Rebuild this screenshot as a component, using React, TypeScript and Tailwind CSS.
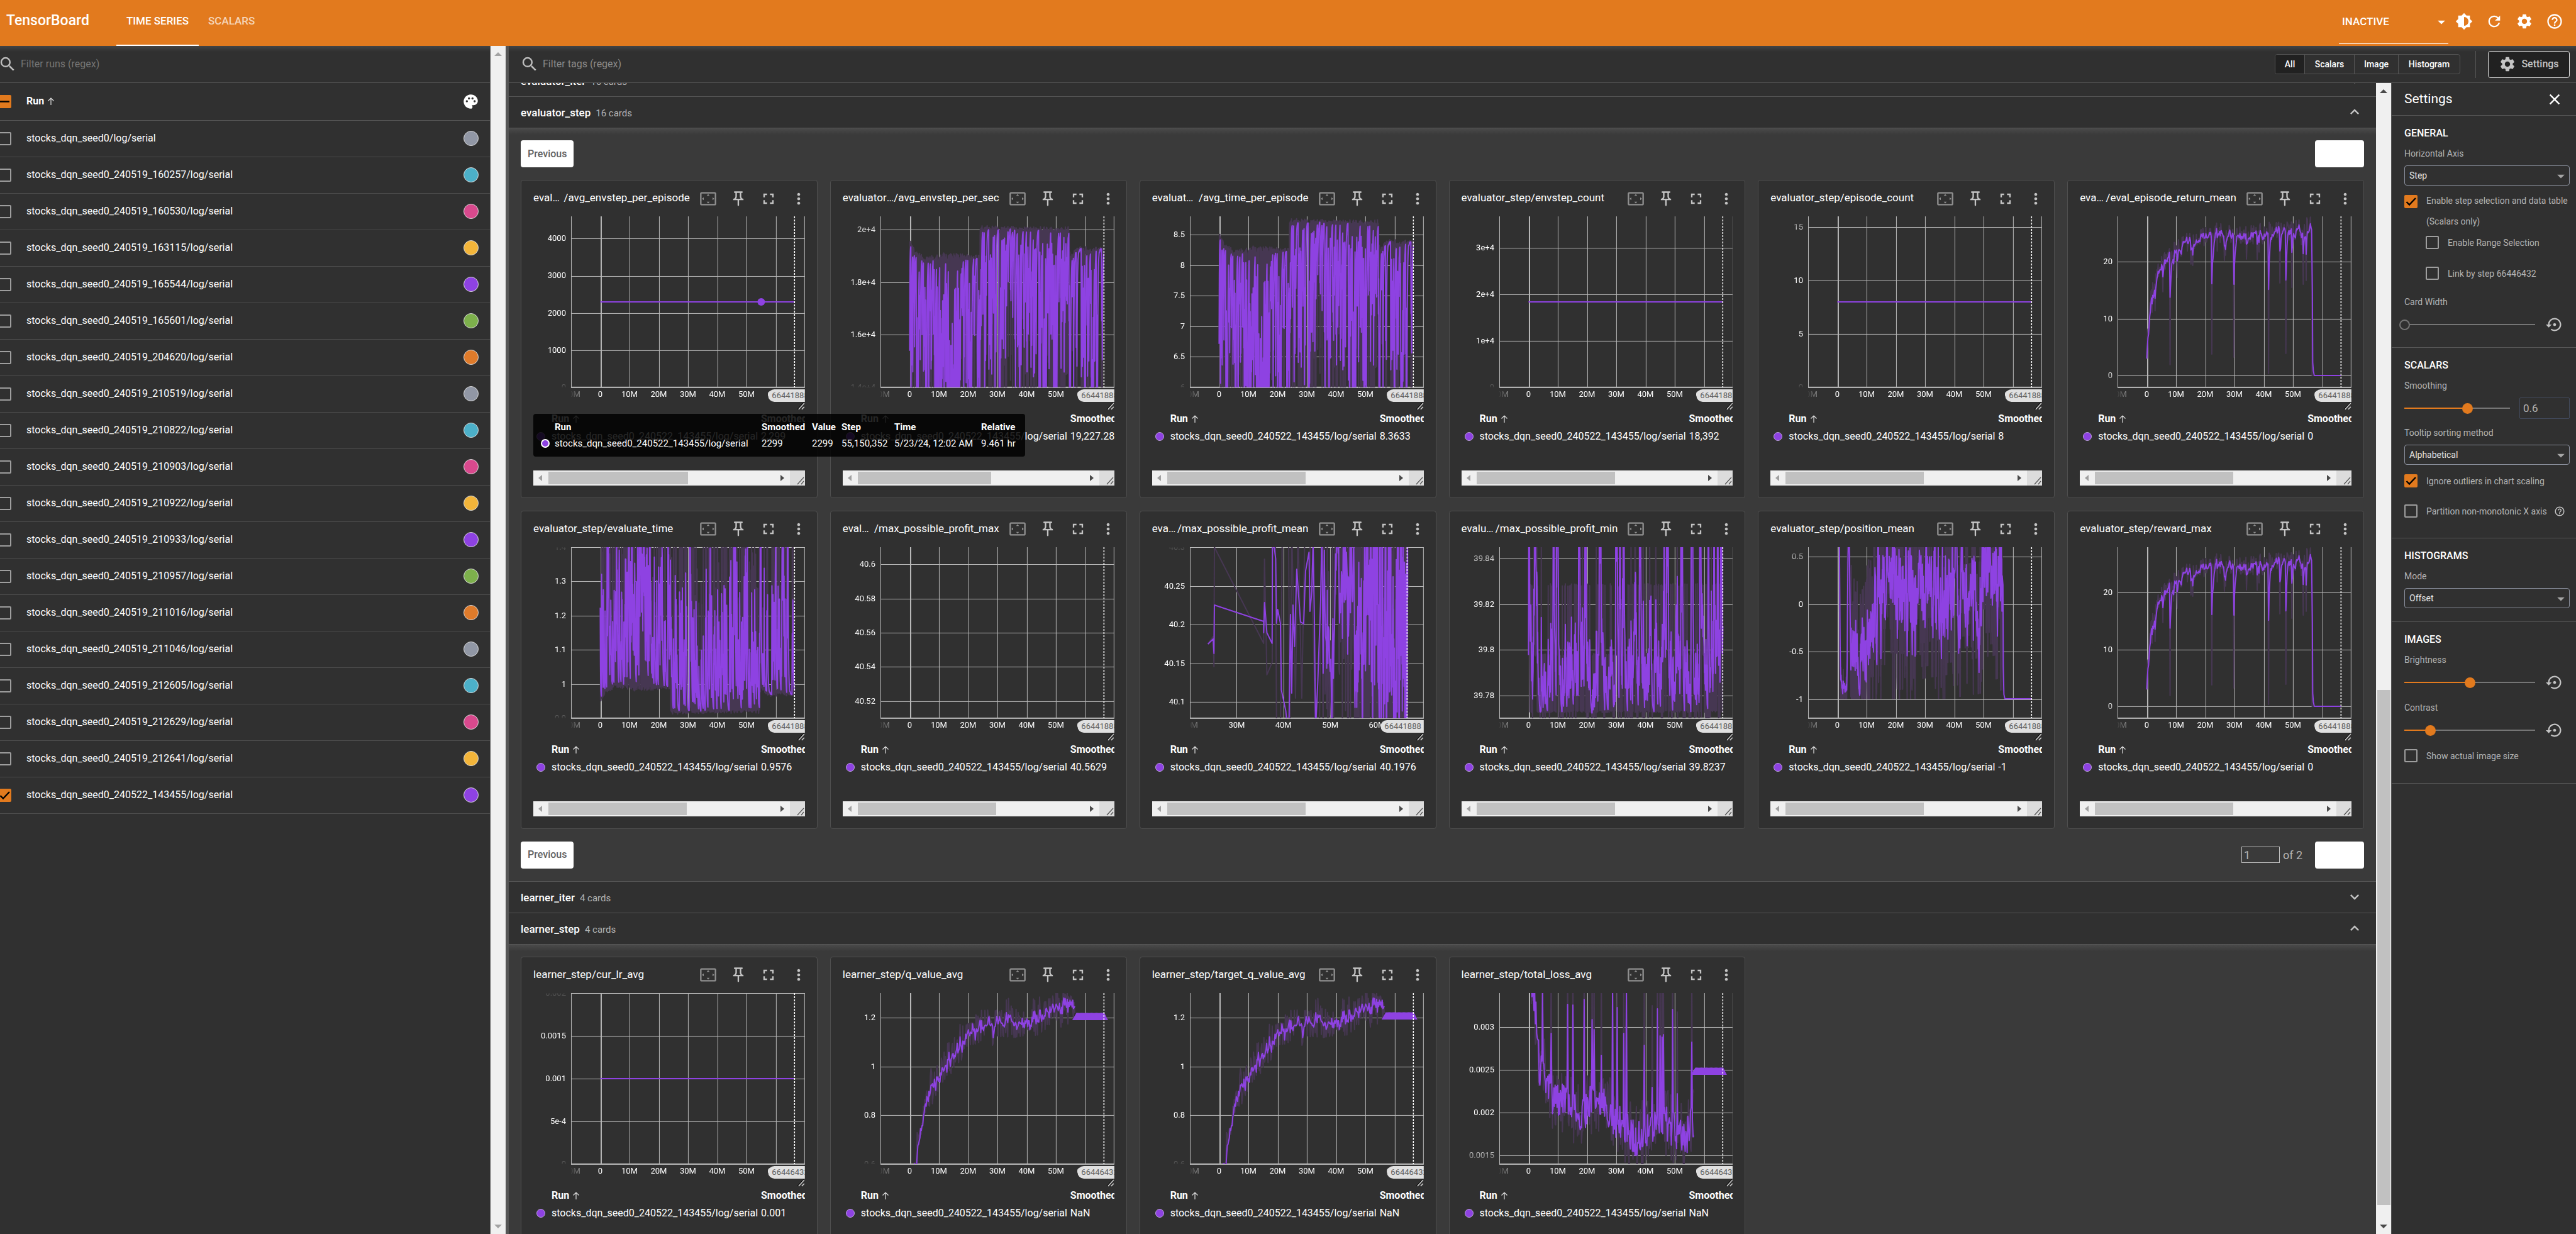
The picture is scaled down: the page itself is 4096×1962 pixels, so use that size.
import React from "react";
import {
  MdArrowDropDown,
  MdBrightness6,
  MdClose,
  MdExpandLess,
  MdExpandMore,
  MdFullscreen,
  MdHelpOutline,
  MdMoreVert,
  MdOutlinePushPin,
  MdRefresh,
  MdSearch,
  MdSettings,
  MdSettingsBackupRestore,
  MdSettingsOverscan,
} from "react-icons/md";

/* ---------------------------------------------------------------- series */

type Pt = [number, number];

const PLOT_W = 372;
const PLOT_H = 272;
const PURPLE = "#8e42e2";
const PURPLE_DIM = "#463752";

function rng(seed: number) {
  let a = seed;
  return () => {
    a = (a + 0x6d2b79f5) | 0;
    let t = Math.imul(a ^ (a >>> 15), 1 | a);
    t = (t + Math.imul(t ^ (t >>> 7), 61 | t)) ^ t;
    return ((t ^ (t >>> 14)) >>> 0) / 4294967296;
  };
}

function at(x: number, pts: Pt[]) {
  if (x <= pts[0][0]) return pts[0][1];
  for (let i = 1; i < pts.length; i++) {
    if (x <= pts[i][0]) {
      const [x0, y0] = pts[i - 1];
      const [x1, y1] = pts[i];
      return y0 + ((y1 - y0) * (x - x0)) / (x1 - x0 || 1);
    }
  }
  return pts[pts.length - 1][1];
}

function smooth(raw: Pt[], weight = 0.6): Pt[] {
  let last = 0;
  return raw.map(([x, y], i) => {
    last = last * weight + (1 - weight) * y;
    return [x, last / (1 - Math.pow(weight, i + 1))];
  });
}

const toPath = (pts: Pt[]) =>
  pts.map(([x, y], i) => `${i ? "L" : "M"}${x.toFixed(1)} ${Math.max(-40, Math.min(320, y)).toFixed(1)}`).join("");

interface Series {
  raw?: Pt[];
  line: Pt[];
  block?: string;
}

function flat(y: number): Series {
  return { line: [[46.5, y], [355.5, y]] };
}

function throughput(map: (y: number) => number): Series {
  const r = rng(7);
  const top: Pt[] = [
    [46.5, 33], [50, 45], [60, 56], [75, 64], [100, 57], [157, 60], [159, 14],
    [300, 16], [302, 63], [312, 48], [355, 47],
  ];
  const raw: Pt[] = [];
  for (let i = 0; i <= 880; i++) {
    const x = 46.5 + i * 0.351;
    const deep = x > 108 && x < 118;
    const p = deep ? 0.75 : x < 158 ? 0.32 : 0.24;
    const drop = r() < p ? 150 + r() * (x < 158 ? 420 : 420) : r() * 9;
    raw.push([x, map(at(x, top) + r() * 5 + drop)]);
  }
  return { raw, line: smooth(raw) };
}

function reward(): Series {
  const r = rng(21);
  const base: Pt[] = [
    [46.5, 226], [48.6, 172], [52, 138], [57, 106], [65, 78], [76, 64], [93, 55], [112, 38],
    [138, 29], [161, 22], [183, 30], [209, 23], [232, 26], [255, 20], [280, 17], [300, 17], [305, 11], [309, 18],
  ];
  const spikes: Pt[] = [
    [84, 236], [95, 97], [120, 78], [150, 219], [170, 70], [185, 224], [205, 68], [240, 250], [258, 106],
    [268, 218], [277, 113], [295, 108], [300, 102], [72, 120], [60, 150],
  ];
  const raw: Pt[] = [];
  for (let x = 46.5; x < 309; x += 0.95) {
    let y = at(x, base) + (r() - 0.42) * 36;
    if (r() < 0.1) y += r() * 40;
    for (const s of spikes) if (Math.abs(s[0] - x) < 0.48) y = s[1];
    raw.push([x, y]);
  }
  const tail: Pt[] = [[310, 120], [310.5, 232], [311.5, 246], [313, 253], [355.5, 253]];
  return { raw: [...raw, [309.5, 253] as Pt, [355.5, 253] as Pt], line: [...smooth(raw), ...tail] };
}

function profitMean(): Series {
  const r = rng(12);
  const line: Pt[] = [
    [28.7, 154], [37, 146], [38.3, 169], [39, 92], [117.4, 118], [117.4, 136], [118.7, 88], [122.5, 136],
    [130.8, 153], [131.4, -10], [133, -10], [136.5, 19], [137.8, 121], [139.7, 99], [144, 121], [145.5, 227],
    [152.5, 260], [155, 285], [157.6, 285], [160, 107], [162, 232], [164, 92], [166.5, 158], [170, 35],
    [176, 119], [181, 122], [184, 38], [189.5, 8], [191, 102], [194, 70], [196, -10], [198, 112], [200, 290],
    [203.5, 214], [208, 84],
  ];
  const raw: Pt[] = [
    [28.7, 154], [37, 142], [38.3, 190], [39, 0], [117.4, 153], [118.7, 19], [122.5, 203], [131, 183],
    [131.4, -40], [136, -30], [138, 310], [144, 310], [147, -30], [157, -30], [159, 310], [162, -30],
    [168, 240], [172, -30], [178, 240], [183, -30], [190, -30], [196, 120], [200, 300], [206, 300], [209, 34],
  ];
  const dense: Pt[] = [];
  let x = 209;
  while (x < 346.5) {
    const k = (x - 209) / 137;
    dense.push([x, 132 + (r() - 0.5) * (500 + 420 * k)]);
    x += Math.max(0.25, 1 - k * 1.1);
  }
  return { raw: [...raw, ...dense], line: [...line, ...smooth(dense)] };
}

function profitMin(): Series {
  const r = rng(33);
  const hot = [48, 56, 66, 86, 92, 127, 137, 160, 186, 192, 197, 224, 250, 262, 267, 290, 306, 320, 332, 342, 348, 353];
  const raw: Pt[] = [];
  for (let i = 0; i <= 760; i++) {
    const x = 46.5 + i * 0.4066;
    const near = hot.some((h) => Math.abs(h - x) < 1.2);
    const q = r();
    let y = q < 0.42 ? 261 : q < 0.52 ? 272 : q < 0.85 ? 171 : 60;
    if (near && r() < 0.55) y = -60 - r() * 320;
    else if (r() < 0.03) y = -20 - r() * 120;
    raw.push([x, y + (r() - 0.5) * 4]);
  }
  return { raw, line: smooth(raw) };
}

function position(): Series {
  const r = rng(5);
  const base: Pt[] = [
    [46.5, -60], [49.5, -60], [50.5, 228], [60, 236], [62, 190], [63, -60], [65, -40], [67, 200], [70, 200],
    [82, 210], [95, 180], [104, 130], [114, 72], [180, 76], [309, 56],
  ];
  const raw: Pt[] = [];
  for (let x = 46.5; x < 309; x += 0.45) {
    const spread = x < 68 ? 60 : x < 104 ? 330 : 350;
    const q = Math.round(((r() - 0.5) * spread) / 19) * 19;
    raw.push([x, Math.min(241, at(x, base) + q)]);
  }
  const tail: Pt[] = [[310, 60], [310.5, 190], [311.5, 234], [313, 241], [355.5, 241]];
  return { raw, line: [...smooth(raw), ...tail] };
}

function qValue(seed: number, top: number): Series {
  const r = rng(seed);
  const base: Pt[] = [
    [54, 275], [60, 241], [67, 193], [74.6, 152], [81, 150], [91, 136], [101, 122], [111, 99], [121, 88],
    [133, 72], [147, 58], [167, 57], [187, 51], [200, 38], [213, 42], [233, 45], [253, 34], [269, 25],
    [279, 27], [305, 19], [310, 19],
  ];
  const raw: Pt[] = [];
  for (let x = 54; x < 310; x += 1.1) {
    raw.push([x, at(x, base) + (r() - 0.5) * 62]);
  }
  const line = smooth(raw).map(([x, y], i) => [x, y * 0.7 + at(raw[i][0], base) * 0.3 + (r() - 0.5) * 16] as Pt);
  return { raw, line, block: blockPath(top) };
}

function blockPath(top: number) {
  let d = `M305 ${top + 12}L312 ${top}`;
  for (let x = 312; x < 356; x += 2) d += `L${x + 1} ${top + 1}L${x + 2} ${top}`;
  return `${d}L362 ${top + 12}Z`;
}

function loss(): Series {
  const r = rng(44);
  const base: Pt[] = [
    [51, -20], [57.4, 30], [64, 118], [70.6, 118], [80.5, 160], [94, 172], [110, 172], [130, 200], [150, 165],
    [173, 184], [189, 205], [216, 232], [236, 217], [255, 199], [282, 220], [297, 241], [303, 205], [310, 200],
  ];
  const up: Pt[] = [
    [69.3, -10], [82, 64], [109, 18], [117, 19], [134.6, 10], [147.8, 42], [151, 58], [162.4, 99], [180, -10],
    [188, 23], [198, 64], [202, -10], [231, 83], [243, 150], [251.5, 25], [255.4, 68], [258.5, 70], [261.4, 66],
    [275.2, 26], [283, 160], [306, 78], [310.2, 81],
  ];
  const raw: Pt[] = [];
  const line: Pt[] = [];
  for (let x = 51; x < 310; x += 1.05) {
    const b = at(x, base);
    raw.push([x, b + (r() - 0.5) * 110]);
    let y = b + (r() - 0.5) * 58;
    for (const s of up)
      if (Math.abs(s[0] - x) < 0.53) {
        y = s[1];
        raw[raw.length - 1][1] = s[1] - 130;
      }
    line.push([x, y]);
  }
  return { raw, line, block: blockPath(118) };
}

/* ---------------------------------------------------------------- charts */

interface CardData {
  group: string;
  tag: string;
  value: string;
  min: number;
  max: number;
  ticks: [number, string][];
  xTicks?: [number, string][];
  marker?: number;
  step?: string;
  series?: Series;
  dot?: Pt;
  thumb?: number;
  tooltip?: boolean;
}

const stdX: [number, string][] = [
  [0, "-10M"], [46.5, "0"], [93, "10M"], [139.5, "20M"], [186, "30M"], [232.5, "40M"], [279, "50M"], [325.5, "60M"], [372, ""],
];
const meanX: [number, string][] = [
  [0, "20M"], [74.4, "30M"], [148.8, "40M"], [223.2, "50M"], [297.6, "60M"], [372, ""],
];

const EV = "evaluator_step";
const LE = "learner_step";

const evaluatorCards: CardData[] = [
  { group: EV, tag: "/avg_envstep_per_episode", value: "2,299", min: 0, max: 4598, ticks: [[4000, "4000"], [3000, "3000"], [2000, "2000"], [1000, "1000"], [0, "0"]], series: flat(136), dot: [302.5, 136], thumb: 222, tooltip: true },
  { group: EV, tag: "/avg_envstep_per_sec", value: "19,227.28", min: 14000, max: 20498, ticks: [[20000, "2e+4"], [18000, "1.8e+4"], [16000, "1.6e+4"], [14000, "1.4e+4"]], series: throughput((y) => y), thumb: 212 },
  { group: EV, tag: "/avg_time_per_episode", value: "8.3633", min: 6, max: 8.8, ticks: [[8.5, "8.5"], [8, "8"], [7.5, "7.5"], [7, "7"], [6.5, "6.5"], [6, "6"]], series: throughput((y) => y - 11) },
  { group: EV, tag: "/envstep_count", value: "18,392", min: 0, max: 36784, ticks: [[30000, "3e+4"], [20000, "2e+4"], [10000, "1e+4"], [0, "0"]], series: flat(136) },
  { group: EV, tag: "/episode_count", value: "8", min: 0, max: 16, ticks: [[15, "15"], [10, "10"], [5, "5"], [0, "0"]], series: flat(136) },
  { group: EV, tag: "/eval_episode_return_mean", value: "0", min: -2.1, max: 28, ticks: [[20, "20"], [10, "10"], [0, "0"]], series: reward() },
  { group: EV, tag: "/evaluate_time", value: "0.9576", min: 0.9, max: 1.4, ticks: [[1.4, "1.4"], [1.3, "1.3"], [1.2, "1.2"], [1.1, "1.1"], [1, "1"], [0.9, "0.9"]], series: throughput((y) => 278 - y * 0.85) },
  { group: EV, tag: "/max_possible_profit_max", value: "40.5629", min: 40.51, max: 40.61, ticks: [[40.6, "40.6"], [40.58, "40.58"], [40.56, "40.56"], [40.54, "40.54"], [40.52, "40.52"]] },
  { group: EV, tag: "/max_possible_profit_mean", value: "40.1976", min: 40.079, max: 40.3, ticks: [[40.3, "40.3"], [40.25, "40.25"], [40.2, "40.2"], [40.15, "40.15"], [40.1, "40.1"]], xTicks: meanX, marker: 345.5, series: profitMean() },
  { group: EV, tag: "/max_possible_profit_min", value: "39.8237", min: 39.77, max: 39.845, ticks: [[39.84, "39.84"], [39.82, "39.82"], [39.8, "39.8"], [39.78, "39.78"]], series: profitMin() },
  { group: EV, tag: "/position_mean", value: "-1", min: -1.2, max: 0.6, ticks: [[0.5, "0.5"], [0, "0"], [-0.5, "-0.5"], [-1, "-1"]], series: position() },
  { group: EV, tag: "/reward_max", value: "0", min: -2.1, max: 28, ticks: [[20, "20"], [10, "10"], [0, "0"]], series: reward() },
];

const learnerCards: CardData[] = [
  { group: LE, tag: "/cur_lr_avg", value: "0.001", min: 0, max: 0.002, ticks: [[0.002, "0.002"], [0.0015, "0.0015"], [0.001, "0.001"], [0.0005, "5e-4"], [0, "0"]], step: "66446432", series: flat(136) },
  { group: LE, tag: "/q_value_avg", value: "NaN", min: 0.6, max: 1.3, ticks: [[1.2, "1.2"], [1, "1"], [0.8, "0.8"], [0.6, "0.6"]], step: "66446432", series: qValue(61, 31) },
  { group: LE, tag: "/target_q_value_avg", value: "NaN", min: 0.6, max: 1.3, ticks: [[1.2, "1.2"], [1, "1"], [0.8, "0.8"], [0.6, "0.6"]], step: "66446432", series: qValue(61, 30) },
  { group: LE, tag: "/total_loss_avg", value: "NaN", min: 0.0014, max: 0.0034, ticks: [[0.003, "0.003"], [0.0025, "0.0025"], [0.002, "0.002"], [0.0015, "0.0015"]], step: "66446432", series: loss() },
];

function Chart({ card }: { card: CardData }) {
  const id = React.useId();
  const xTicks = card.xTicks ?? stdX;
  const marker = card.marker ?? 355.5;
  const py = (v: number) => PLOT_H - ((v - card.min) / (card.max - card.min)) * PLOT_H;
  return (
    <svg viewBox="0 0 432 308" className="block w-full" role="img" aria-label={`${card.group}${card.tag} chart`}>
      <defs>
        <clipPath id={`${id}p`}><rect width={PLOT_W} height={PLOT_H} /></clipPath>
        <clipPath id={`${id}x`}><rect width={PLOT_W} height="40" /></clipPath>
        <linearGradient id={`${id}gy`} x1="0" y1="0" x2="0" y2="1">
          <stop offset="0" stopColor="#111" />
          <stop offset="0.1" stopColor="#fff" />
          <stop offset="0.9" stopColor="#fff" />
          <stop offset="1" stopColor="#111" />
        </linearGradient>
        <linearGradient id={`${id}gx`}>
          <stop offset="0" stopColor="#111" />
          <stop offset="0.1" stopColor="#fff" />
        </linearGradient>
        <mask id={`${id}my`} maskUnits="userSpaceOnUse" x="0" y="0" width="60" height={PLOT_H}>
          <rect width="60" height={PLOT_H} fill={`url(#${id}gy)`} />
        </mask>
        <mask id={`${id}mx`} maskUnits="userSpaceOnUse" x="0" y="0" width={PLOT_W} height="30">
          <rect width={PLOT_W} height="30" fill={`url(#${id}gx)`} />
        </mask>
      </defs>
      <g mask={`url(#${id}my)`}>
        {card.ticks.map(([v, label]) => (
          <text key={label} x="52" y={py(v) + 4} textAnchor="end" className="fill-white text-[13px]">{label}</text>
        ))}
      </g>
      <g transform="translate(60 0)">
        <g fill="#b9b9b9">
          {xTicks.map(([x]) => (
            <rect key={x} x={Math.min(371, Math.round(x))} y="0" width={x === 46.5 ? 2 : 1} height={PLOT_H} />
          ))}
          {card.ticks.map(([v]) => (
            <rect key={v} x="0" y={Math.max(0, Math.min(271, Math.round(py(v))))} width={PLOT_W} height="1" />
          ))}
          <rect x="0" y="271" width={PLOT_W} height="2" />
        </g>
        {card.series && (
          <g clipPath={`url(#${id}p)`} fill="none" strokeLinejoin="round">
            {card.series.raw && <path d={toPath(card.series.raw)} stroke={PURPLE_DIM} strokeWidth="2" />}
            <path d={toPath(card.series.line)} stroke={PURPLE} strokeWidth="2" />
            {card.series.block && <path d={card.series.block} fill={PURPLE} />}
            {card.dot && <circle cx={card.dot[0]} cy={card.dot[1]} r="6" fill={PURPLE} />}
          </g>
        )}
        <line x1={marker} x2={marker} y1="0" y2={PLOT_H} stroke="#fff" strokeWidth="1.5" strokeDasharray="3 2" />
        <g transform="translate(0 272)">
          <g mask={`url(#${id}mx)`}>
            {xTicks.map(([x, label]) => (
              <text key={x} x={x} y="15" textAnchor="middle" className="fill-white text-[13px]">{label}</text>
            ))}
          </g>
          <g clipPath={`url(#${id}x)`}>
            <rect x={marker - 42} y="3" width="84" height="20" rx="10" fill="#e0e0e0" />
            <text x={marker - 36} y="17" className="fill-[#616161] text-[13px]">{card.step ?? "66441888"}</text>
          </g>
        </g>
      </g>
      <path d="M422 307L431 297M427 307L431 303" stroke="#c9c9c9" strokeWidth="1.5" />
      <path d="M420 307L430 296" stroke="#000" strokeWidth="1" />
    </svg>
  );
}

function HScroll({ thumb }: { thumb: number }) {
  return (
    <div aria-hidden="true" className="flex h-6 items-center bg-[#f0f0f0]">
      <svg viewBox="0 0 24 24" className="h-6 w-6 shrink-0"><path d="M14 7L8 12L14 17Z" fill="#a0a0a0" /></svg>
      <div className="h-5 bg-[#c1c1c1]" style={{ width: thumb }} />
      <svg viewBox="0 0 24 24" className="ml-auto h-6 w-6 shrink-0"><path d="M9 7L15 12L9 17Z" fill="#4a4a4a" /></svg>
      <svg viewBox="0 0 24 24" className="h-6 w-6 shrink-0 bg-[#dcdcdc]"><path d="M12 22L22 11M18 22L22 17" stroke="#555" strokeWidth="1.3" /></svg>
    </div>
  );
}

const SortArrow = () => (
  <svg viewBox="0 0 14 14" className="ml-1 inline h-[14px] w-[14px] align-[-2px]" fill="none" stroke="#e0e0e0" strokeWidth="1.2">
    <path d="M7 13V2M2.5 6.5L7 2L11.5 6.5" />
  </svg>
);

const RUN = "stocks_dqn_seed0_240522_143455/log/serial";

function Tooltip() {
  return (
    <div className="absolute top-[371px] left-[19px] z-10 rounded bg-black/85 py-2">
      <table className="w-[782px] table-fixed text-left text-[15px] leading-[26px] whitespace-nowrap text-white">
        <colgroup>
          <col className="w-[34px]" /><col className="w-[329px]" /><col className="w-20" /><col className="w-[47px]" />
          <col className="w-[84px]" /><col className="w-[138px]" /><col className="w-[70px]" />
        </colgroup>
        <thead>
          <tr>
            <th /><th className="font-bold">Run</th><th className="font-bold">Smoothed</th><th className="font-bold">Value</th>
            <th className="font-bold">Step</th><th className="font-bold">Time</th><th className="font-bold">Relative</th>
          </tr>
        </thead>
        <tbody>
          <tr>
            <td><span className="ml-3 block h-[14px] w-[14px] rounded-full border-2 border-white bg-[#8e42e2]" /></td>
            <td>{RUN}</td><td>2299</td><td>2299</td><td>55,150,352</td><td>5/23/24, 12:02 AM</td><td>9.461 hr</td>
          </tr>
        </tbody>
      </table>
    </div>
  );
}

function IconButton({ label, className, children }: { label: string; className?: string; children: React.ReactNode }) {
  return (
    <button type="button" aria-label={label} className={`flex h-10 w-12 shrink-0 items-center justify-center text-[28px] ${className ?? ""}`}>
      {children}
    </button>
  );
}

function Card({ card }: { card: CardData }) {
  return (
    <article className="relative min-w-0 rounded border border-[#4f4f4f] bg-[#303030]">
      <header className="flex h-[57px] items-center pr-[5px] pl-[19px] text-[#c4c4c4]">
        <h3 className="mr-[5px] flex min-w-0 flex-1 pb-[2px] text-[17px] whitespace-pre text-white">
          <span className="min-w-0 truncate">{card.group}</span>
          <span className="shrink-0">{card.tag}</span>
        </h3>
        <IconButton label="Fit line chart domains to data" className="text-[#8f8f8f]"><MdSettingsOverscan /></IconButton>
        <IconButton label="Pin card"><MdOutlinePushPin /></IconButton>
        <IconButton label="Toggle full size mode"><MdFullscreen /></IconButton>
        <IconButton label="More line chart options"><MdMoreVert /></IconButton>
      </header>
      <div className="px-[19px] pb-[19px]">
        <Chart card={card} />
        <div className="h-24 overflow-hidden">
          <table className="w-[560px] table-fixed text-left text-[16px] leading-[28px] whitespace-nowrap text-white">
            <colgroup><col className="w-[29px]" /><col className="w-[333px]" /><col /></colgroup>
            <thead>
              <tr><th /><th className="font-bold">Run<SortArrow /></th><th className="font-bold">Smoothed</th></tr>
            </thead>
            <tbody>
              <tr>
                <td><span className="ml-[5px] block h-[14px] w-[14px] rounded-full border border-[#b9a3d8] bg-[#8e42e2]" /></td>
                <td>{RUN}</td><td>{card.value}</td>
              </tr>
            </tbody>
          </table>
        </div>
        <HScroll thumb={card.thumb ?? 220} />
      </div>
      {card.tooltip && <Tooltip />}
    </article>
  );
}

/* ---------------------------------------------------------------- controls */

function Checkbox({ id, state = "off", label }: { id?: string; state?: "on" | "off" | "mixed"; label?: string }) {
  return (
    <span className="grid h-[21px] w-[21px] shrink-0">
      <input
        id={id}
        type="checkbox"
        aria-label={label}
        defaultChecked={state !== "off"}
        className="col-start-1 row-start-1 h-[21px] w-[21px] appearance-none rounded-[2px] border-2 border-[#9e9e9e] checked:border-[#e27a1e] checked:bg-[#e27a1e]"
      />
      {state !== "off" && (
        <svg viewBox="0 0 21 21" className="pointer-events-none col-start-1 row-start-1 h-[21px] w-[21px]" fill="none" stroke="#000" strokeWidth="2.4">
          <path d={state === "on" ? "M3.5 11L8 15.5L18 5" : "M3 10.5H18"} />
        </svg>
      )}
    </span>
  );
}

function SelectBox({ id, value, label }: { id: string; value: string; label: string }) {
  return (
    <div>
      <label htmlFor={id} className="mt-[11px] block text-[14px] leading-5 text-[#b4b4b4]">{label}</label>
      <div className="relative mt-[9px]">
        <select id={id} className="h-8 w-full appearance-none rounded border border-[#8a8f9c] bg-transparent px-[7px] text-[14px] text-[#e4e4e4]">
          <option>{value}</option>
        </select>
        <MdArrowDropDown className="pointer-events-none absolute top-[3px] right-0 text-[28px] text-[#a6a6a6]" />
      </div>
    </div>
  );
}

const thumbBase =
  "-mx-2 h-[2px] min-w-0 flex-1 appearance-none [&::-webkit-slider-thumb]:h-[17px] [&::-webkit-slider-thumb]:w-[17px] [&::-webkit-slider-thumb]:appearance-none [&::-webkit-slider-thumb]:rounded-full";
const thumbOn = "[&::-webkit-slider-thumb]:bg-[#e27a1e]";

function SectionTitle({ children }: { children: React.ReactNode }) {
  return <h3 className="text-[16px] leading-[22px] font-medium text-white">{children}</h3>;
}

function ResetButton({ label }: { label: string }) {
  return (
    <button type="button" aria-label={label} className="ml-[17px] flex h-7 w-7 shrink-0 items-center justify-center text-[28px] text-[#c4c4c4]">
      <MdSettingsBackupRestore />
    </button>
  );
}

const fieldLabel = "block text-[14px] leading-5 text-[#b4b4b4]";

function SettingsPanel() {
  return (
    <aside className="w-[294px] shrink-0 border-l border-[#555] bg-[#303030]">
      <div className="flex h-[52px] items-center justify-between border-b border-[#555] pr-5 pl-5">
        <h2 className="text-[21px] text-white">Settings</h2>
        <button type="button" aria-label="Close settings" className="text-[28px] text-white"><MdClose /></button>
      </div>

      <section className="border-b border-[#555] pt-[17px] pr-[10px] pb-[22px] pl-5">
        <SectionTitle>GENERAL</SectionTitle>
        <SelectBox id="axis" value="Step" label="Horizontal Axis" />
        <div className="mt-2 flex">
          <span className="mt-[7px]"><Checkbox id="step-sel" state="on" /></span>
          <label htmlFor="step-sel" className="ml-[14px] text-[14px] leading-[33px] whitespace-nowrap text-[#b4b4b4]">
            Enable step selection and data table<br />(Scalars only)
          </label>
        </div>
        <div className="mt-[6px] ml-[34px] flex h-[21px] items-center">
          <Checkbox id="range-sel" />
          <label htmlFor="range-sel" className="ml-[14px] text-[14px] leading-5 text-[#b4b4b4]">Enable Range Selection</label>
        </div>
        <div className="mt-7 ml-[34px] flex h-[21px] items-center">
          <Checkbox id="link-step" />
          <label htmlFor="link-step" className="ml-[14px] text-[14px] leading-5 text-[#b4b4b4]">Link by step 66446432</label>
        </div>
        <label htmlFor="card-width" className={`mt-[25px] ${fieldLabel}`}>Card Width</label>
        <div className="mt-3 flex h-7 items-center pr-[10px]">
          <input id="card-width" type="range" defaultValue={0} className={`${thumbBase} bg-[linear-gradient(to_right,transparent_16px,#757575_16px,#757575_calc(100%-8px),transparent_calc(100%-8px))] [&::-webkit-slider-thumb]:border-2 [&::-webkit-slider-thumb]:border-[#757575] [&::-webkit-slider-thumb]:bg-[#303030]`} />
          <ResetButton label="Reset card width" />
        </div>
      </section>

      <section className="border-b border-[#555] pt-[17px] pr-[10px] pb-8 pl-5">
        <SectionTitle>SCALARS</SectionTitle>
        <label htmlFor="smoothing" className={`mt-[11px] ${fieldLabel}`}>Smoothing</label>
        <div className="mt-[9px] flex h-[34px] items-center">
          <input id="smoothing" type="range" defaultValue={60} className={`${thumbBase} ${thumbOn} bg-[linear-gradient(to_right,transparent_8px,#e27a1e_8px,#e27a1e_60%,#757575_60%,#757575_calc(100%-8px),transparent_calc(100%-8px))]`} />
          <input aria-label="Smoothing value" type="text" defaultValue="0.6" className="ml-[15px] h-[34px] w-20 rounded-[2px] border border-[#424a5c] bg-transparent px-[5px] text-[17px] text-[#b4b4b4]" />
        </div>
        <div className="pt-px"><SelectBox id="sorting" value="Alphabetical" label="Tooltip sorting method" /></div>
        <div className="mt-[15px] flex h-[21px] items-center">
          <Checkbox id="outliers" state="on" />
          <label htmlFor="outliers" className="ml-[14px] text-[14px] leading-5 text-[#b4b4b4]">Ignore outliers in chart scaling</label>
        </div>
        <div className="mt-[27px] flex h-[21px] items-center">
          <Checkbox id="monotonic" />
          <label htmlFor="monotonic" className="ml-[14px] text-[14px] leading-5 whitespace-nowrap text-[#b4b4b4]">Partition non-monotonic X axis</label>
          <MdHelpOutline className="ml-[11px] shrink-0 text-[18px] text-[#c4c4c4]" />
        </div>
      </section>

      <section className="border-b border-[#555] pt-[17px] pr-[10px] pb-[21px] pl-5">
        <SectionTitle>HISTOGRAMS</SectionTitle>
        <SelectBox id="mode" value="Offset" label="Mode" />
      </section>

      <section className="border-b border-[#555] pt-[17px] pr-[10px] pb-[33px] pl-5">
        <SectionTitle>IMAGES</SectionTitle>
        <label htmlFor="brightness" className={`mt-[11px] ${fieldLabel}`}>Brightness</label>
        <div className="mt-3 flex h-7 items-center pr-[10px]">
          <input id="brightness" type="range" defaultValue={50} className={`${thumbBase} ${thumbOn} bg-[linear-gradient(to_right,transparent_8px,#e27a1e_8px,#e27a1e_50%,#757575_50%,#757575_calc(100%-8px),transparent_calc(100%-8px))]`} />
          <ResetButton label="Reset brightness" />
        </div>
        <label htmlFor="contrast" className={`mt-4 ${fieldLabel}`}>Contrast</label>
        <div className="mt-3 flex h-7 items-center pr-[10px]">
          <input id="contrast" type="range" defaultValue={20} className={`${thumbBase} ${thumbOn} bg-[linear-gradient(to_right,transparent_8px,#e27a1e_8px,#e27a1e_21%,#757575_21%,#757575_calc(100%-8px),transparent_calc(100%-8px))]`} />
          <ResetButton label="Reset contrast" />
        </div>
        <div className="mt-4 flex h-[21px] items-center">
          <Checkbox id="actual-size" />
          <label htmlFor="actual-size" className="ml-[14px] text-[14px] leading-5 text-[#b4b4b4]">Show actual image size</label>
        </div>
      </section>
    </aside>
  );
}

/* ---------------------------------------------------------------- runs */

const runColors = ["#9197a5", "#4cb0c9", "#d8498d", "#f3b53a", "#8e42e2", "#7db04c", "#df7b2b"];

const runNames = [
  "", "_240519_160257", "_240519_160530", "_240519_163115", "_240519_165544", "_240519_165601", "_240519_204620",
  "_240519_210519", "_240519_210822", "_240519_210903", "_240519_210922", "_240519_210933", "_240519_210957",
  "_240519_211016", "_240519_211046", "_240519_212605", "_240519_212629", "_240519_212641", "_240522_143455",
].map((s) => `stocks_dqn_seed0${s}/log/serial`);

function VScroll({ thumb, up, down }: { thumb?: boolean; up: string; down: string }) {
  return (
    <div aria-hidden="true" className="flex w-6 shrink-0 flex-col items-center bg-[#f0f0f0]">
      <svg viewBox="0 0 24 24" className="h-6 w-6 shrink-0"><path d="M6 16L12 10L18 16Z" fill={up} /></svg>
      {thumb ? (
        <>
          <div className="grow-[941]" />
          <div className="w-[21px] grow-[819] bg-[#c1c1c1]" />
          <div className="grow-[22]" />
        </>
      ) : (
        <div className="grow" />
      )}
      <svg viewBox="0 0 24 24" className="h-6 w-6 shrink-0"><path d="M6 9L12 15L18 9Z" fill={down} /></svg>
    </div>
  );
}

function PaletteIcon() {
  return (
    <svg viewBox="0 0 24 24" className="h-[27px] w-[27px]">
      <path fill="#fff" d="M12 22C6.49 22 2 17.51 2 12S6.49 2 12 2s10 4.04 10 9c0 3.31-2.69 6-6 6h-1.77c-.28 0-.5.22-.5.5 0 .12.05.23.13.33.41.47.64 1.06.64 1.67A2.5 2.5 0 0 1 12 22z" />
      <g fill="#303030">
        <circle cx="6.5" cy="11.5" r="1.5" /><circle cx="9.5" cy="7.5" r="1.5" />
        <circle cx="14.5" cy="7.5" r="1.5" /><circle cx="17.5" cy="11.5" r="1.5" />
      </g>
    </svg>
  );
}

function RunsPanel() {
  return (
    <aside className="flex w-[804px] shrink-0 bg-[#303030]">
      <div className="min-w-0 flex-1 overflow-hidden border-r border-[#555]">
        <label className="flex h-[59px] items-center border-b border-[#555] bg-[linear-gradient(#444444,#303030_9px)]">
          <MdSearch className="-ml-[3px] shrink-0 text-[30px] text-[#bdbdbd]" />
          <input type="text" placeholder="Filter runs (regex)" aria-label="Filter runs" className="ml-[6px] w-full bg-transparent text-[16px] text-white placeholder:text-[#757575]" />
        </label>
        <table className="w-full table-fixed text-left text-[16px] text-white">
          <colgroup><col className="w-[42px]" /><col /><col className="w-[62px]" /></colgroup>
          <thead>
            <tr className="h-[59px] border-b border-[#555]">
              <th><span className="-ml-[3px] block"><Checkbox state="mixed" label="Select all runs" /></span></th>
              <th className="font-bold">Run<SortArrow /></th>
              <th><button type="button" aria-label="Color runs" className="ml-[18px] block"><PaletteIcon /></button></th>
            </tr>
          </thead>
          <tbody>
            {runNames.map((name, i) => (
              <tr key={name} className="h-[58px] border-b border-[#4d4d4d]">
                <td><span className="-ml-[3px] block"><Checkbox state={i === 18 ? "on" : "off"} label={name} /></span></td>
                <td>{name}</td>
                <td>
                  <button type="button" aria-label={`Change color of ${name}`} className="ml-5 block h-6 w-6 rounded-full border border-[#d5d5d5]" style={{ background: runColors[i % 7] }} />
                </td>
              </tr>
            ))}
          </tbody>
        </table>
      </div>
      <VScroll up="#a3a3a3" down="#a3a3a3" />
    </aside>
  );
}

/* ---------------------------------------------------------------- main */

function GroupHeader({ name, count, open }: { name: string; count: string; open: boolean }) {
  return (
    <button type="button" aria-expanded={open} className="flex h-[50px] w-full items-center border-b border-[#555] bg-[#303030] pt-[3px] pr-5 pl-[19px] text-left">
      <span className="text-[17px] font-medium text-white">{name}</span>
      <span className="ml-[8px] text-[15px] text-[#b4b4b4]">{count}</span>
      <span className="ml-auto pb-1 text-[28px] text-[#c4c4c4]">{open ? <MdExpandLess /> : <MdExpandMore />}</span>
    </button>
  );
}

function Pager({ withInput }: { withInput?: boolean }) {
  return (
    <div className="flex h-[43px] items-center">
      <button type="button" className="h-[43px] rounded bg-white px-[11px] text-[16px] font-medium text-[#616161]">Previous</button>
      {withInput && (
        <label className="ml-auto flex items-center text-[18px] text-[#b4b4b4]">
          <input type="text" aria-label="Page number" defaultValue="1" className="mr-[5px] h-[26px] w-[61px] border border-[#c4c4c4] bg-transparent px-[3px] text-[18px]" />
          of 2
        </label>
      )}
      <button type="button" aria-label="Next" className={`h-[43px] w-[78px] rounded bg-white ${withInput ? "ml-5" : "ml-auto"}`} />
    </div>
  );
}

const bodyClass = "bg-[#3a3a3a] bg-[linear-gradient(#4a4a4a,#3a3a3a_10px)] px-[19px] pt-[19px]";

function MainView() {
  return (
    <main className="flex min-w-0 flex-1 flex-col border-l-[5px] border-[#555]">
      <div className="flex h-[59px] shrink-0 items-center border-b border-[#555] bg-[#303030] bg-[linear-gradient(#444444,#303030_9px)] pr-[10px] pl-[18px]">
        <MdSearch className="shrink-0 text-[30px] text-[#bdbdbd]" />
        <input type="text" placeholder="Filter tags (regex)" aria-label="Filter tags" className="ml-[6px] min-w-0 flex-1 bg-transparent text-[16px] text-white placeholder:text-[#8a8a8a]" />
        <div className="flex h-8 overflow-hidden rounded border border-[#555] text-[14px] font-medium text-white">
          <button type="button" className="w-[46px] bg-[#212121]">All</button>
          <button type="button" className="w-[79px] border-l border-[#555]">Scalars</button>
          <button type="button" className="w-[70px] border-l border-[#555]">Image</button>
          <button type="button" className="w-[98px] border-l border-[#555]">Histogram</button>
        </div>
        <div className="mr-[19px] ml-6 h-[43px] w-px bg-[#555]" />
        <button type="button" className="flex h-[43px] w-[130px] items-center justify-center gap-2 rounded border border-[#e0e0e0] bg-[#212121] text-[16px] font-medium text-[#c4c4c4]">
          <MdSettings className="text-[28px]" />
          Settings
        </button>
      </div>
      <div className="flex min-h-0 flex-1">
        <div className="min-w-0 flex-1 overflow-hidden bg-[#3a3a3a]">
          <div className="-mt-7">
            <GroupHeader name="evaluator_iter" count="16 cards" open={false} />
            <GroupHeader name="evaluator_step" count="16 cards" open />
            <div className={`${bodyClass} border-b border-[#555] pb-5`}>
              <Pager />
              <div className="grid grid-cols-6 gap-5 py-5">
                {evaluatorCards.map((c) => <Card key={c.tag} card={c} />)}
              </div>
              <Pager withInput />
            </div>
            <GroupHeader name="learner_iter" count="4 cards" open={false} />
            <GroupHeader name="learner_step" count="4 cards" open />
            <div className={bodyClass}>
              <div className="grid grid-cols-6 gap-5">
                {learnerCards.map((c) => <Card key={c.tag} card={c} />)}
              </div>
            </div>
          </div>
        </div>
        <VScroll thumb up="#4a4a4a" down="#4a4a4a" />
        <SettingsPanel />
      </div>
    </main>
  );
}

export default function App() {
  return (
    <div className="flex h-screen w-full flex-col overflow-hidden bg-[#303030] font-['Roboto',sans-serif]">
      <header className="flex h-[73px] shrink-0 items-stretch bg-[#e27a1e] text-white">
        <h1 className="flex w-[185px] items-center pb-[6px] pl-[10px] text-[23px] font-medium">TensorBoard</h1>
        <nav className="flex text-[17px] font-medium">
          <a href="#timeseries" className="flex w-[131px] items-center justify-center border-b-2 border-white pb-1">TIME SERIES</a>
          <a href="#scalars" className="flex items-center pb-[6px] pl-[15px] text-white/70">SCALARS</a>
        </nav>
        <div className="ml-auto flex items-start pr-[10px]">
          <div className="relative mr-px h-[70px] w-[174px] border-b border-white">
            <select aria-label="Inactive plugins" className="h-[69px] w-full appearance-none bg-transparent pl-[5px] text-[17px] font-medium">
              <option>INACTIVE</option>
            </select>
            <MdArrowDropDown className="pointer-events-none absolute top-[21px] -right-[3px] text-[28px]" />
          </div>
          <div className="flex h-[68px] items-center">
            <IconButton label="Toggle dark mode"><MdBrightness6 /></IconButton>
            <IconButton label="Reload"><MdRefresh /></IconButton>
            <IconButton label="Settings"><MdSettings /></IconButton>
            <IconButton label="Help"><MdHelpOutline /></IconButton>
          </div>
        </div>
      </header>
      <div className="flex min-h-0 flex-1">
        <RunsPanel />
        <MainView />
      </div>
    </div>
  );
}
